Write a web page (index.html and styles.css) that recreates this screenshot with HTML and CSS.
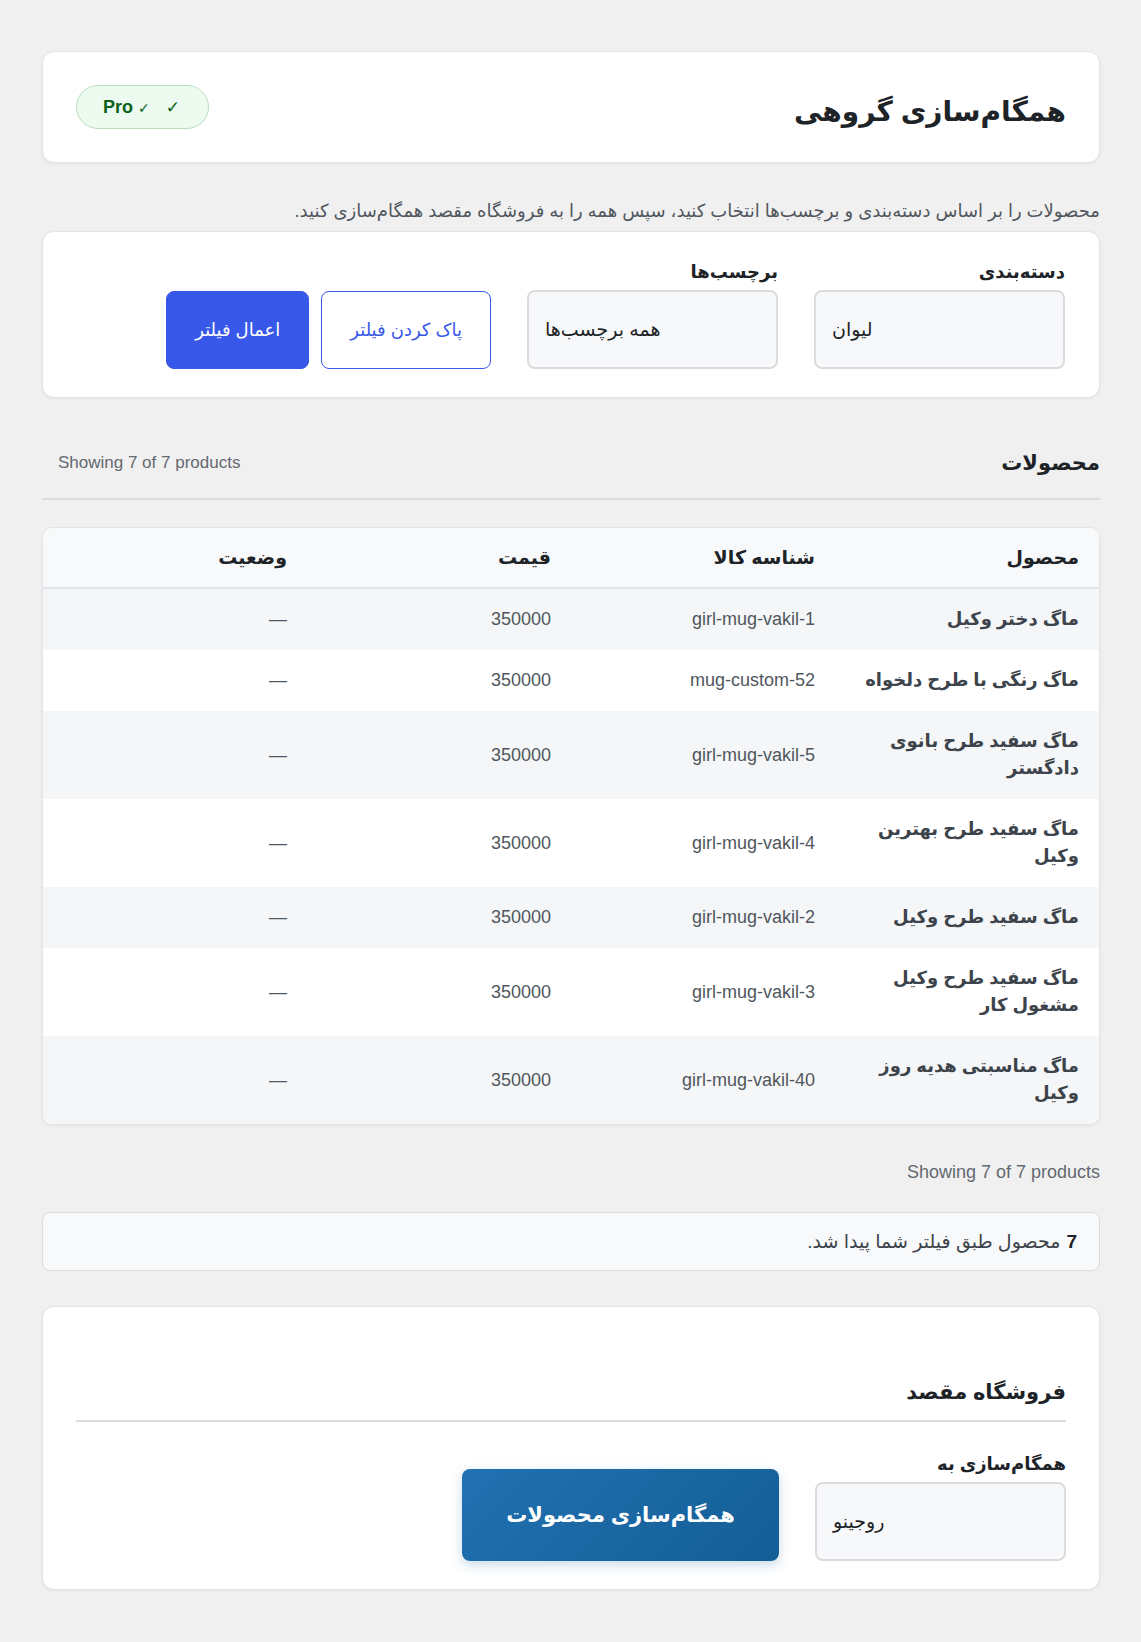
FILE: index.html
```html
<!DOCTYPE html>
<html lang="fa" dir="rtl">
<head>
<meta charset="utf-8">
<title>همگام‌سازی گروهی</title>
<link rel="stylesheet" href="styles.css">
</head>
<body>
<div class="wrap">
  <header class="card head-card">
    <h1 class="page-title">همگام‌سازی گروهی</h1>
    <span class="badge"><span class="badge-text">Pro <span class="tick-sm">✓</span></span><span class="tick-lg">✓</span></span>
  </header>

  <p class="intro">محصولات را بر اساس دسته‌بندی و برچسب‌ها انتخاب کنید، سپس همه را به فروشگاه مقصد همگام‌سازی کنید.</p>

  <section class="card filter-card">
    <div class="row">
      <div class="field">
        <label class="label">دسته‌بندی</label>
        <div class="select">لیوان</div>
      </div>
      <div class="field">
        <label class="label">برچسب‌ها</label>
        <div class="select">همه برچسب‌ها</div>
      </div>
      <div class="actions">
        <button class="btn btn-outline">پاک کردن فیلتر</button>
        <button class="btn btn-primary">اعمال فیلتر</button>
      </div>
    </div>
  </section>

  <div class="section-head">
    <h2 class="section-title">محصولات</h2>
    <span class="count count-top">Showing 7 of 7 products</span>
  </div>

  <div class="table-card">
    <table class="products">
      <thead>
        <tr><th>محصول</th><th>شناسه کالا</th><th>قیمت</th><th>وضعیت</th></tr>
      </thead>
      <tbody>
        <tr><td class="name">ماگ دختر وکیل</td><td class="sku">girl-mug-vakil-1</td><td class="num">350000</td><td class="num">—</td></tr>
        <tr><td class="name">ماگ رنگی با طرح دلخواه</td><td class="sku">mug-custom-52</td><td class="num">350000</td><td class="num">—</td></tr>
        <tr><td class="name">ماگ سفید طرح بانوی دادگستر</td><td class="sku">girl-mug-vakil-5</td><td class="num">350000</td><td class="num">—</td></tr>
        <tr><td class="name">ماگ سفید طرح بهترین وکیل</td><td class="sku">girl-mug-vakil-4</td><td class="num">350000</td><td class="num">—</td></tr>
        <tr><td class="name">ماگ سفید طرح وکیل</td><td class="sku">girl-mug-vakil-2</td><td class="num">350000</td><td class="num">—</td></tr>
        <tr><td class="name">ماگ سفید طرح وکیل مشغول کار</td><td class="sku">girl-mug-vakil-3</td><td class="num">350000</td><td class="num">—</td></tr>
        <tr><td class="name">ماگ مناسبتی هدیه روز وکیل</td><td class="sku">girl-mug-vakil-40</td><td class="num">350000</td><td class="num">—</td></tr>
      </tbody>
    </table>
  </div>

  <div class="count count-bottom">Showing 7 of 7 products</div>

  <div class="notice"><strong>7</strong> محصول طبق فیلتر شما پیدا شد.</div>

  <section class="card target-card">
    <h3 class="target-title">فروشگاه مقصد</h3>
    <div class="row target-row">
      <div class="field">
        <label class="label">همگام‌سازی به</label>
        <div class="select">روجینو</div>
      </div>
      <button class="btn btn-sync">همگام‌سازی محصولات</button>
    </div>
  </section>
</div>
</body>
</html>
```

FILE: styles.css
```css
* { box-sizing: border-box; }

html, body { margin: 0; padding: 0; }

body {
  background: #f0f0f1;
  color: #1d2327;
  font-family: "Liberation Sans", "DejaVu Sans", sans-serif;
  direction: rtl;
}

.wrap {
  margin: 0 41px 0 42px;
  padding: 51px 0 53px;
}

.card {
  background: #fff;
  border: 1px solid #e2e4e7;
  border-radius: 12px;
  box-shadow: 0 1px 3px rgba(0, 0, 0, 0.06);
}

.head-card {
  height: 112px;
  padding: 0 33px;
  display: flex;
  align-items: center;
  justify-content: space-between;
}

.page-title {
  margin: 10px 0 0;
  font-size: 28px;
  line-height: 40px;
  font-weight: 700;
  color: #1d2327;
}

.badge {
  direction: ltr;
  display: inline-flex;
  align-items: center;
  gap: 16px;
  height: 44px;
  padding: 0 28px 0 26px;
  background: #edfaef;
  border: 1px solid #b9dfc1;
  border-radius: 22px;
  color: #0b6119;
  font-weight: 700;
  font-size: 18px;
}

.tick-sm { font-size: 14px; font-weight: 400; }
.tick-lg { font-size: 17px; }

.intro {
  margin: 36px 0 8px;
  font-size: 18px;
  line-height: 24px;
  color: #50575e;
}

.filter-card {
  padding: 29px 34px 28px;
}

.row {
  display: flex;
  align-items: flex-end;
  gap: 36px;
}

.field {
  width: 251px;
  display: flex;
  flex-direction: column;
}

.label {
  display: block;
  font-size: 18px;
  line-height: 22px;
  font-weight: 700;
  color: #1d2327;
  margin-bottom: 7px;
}

.select {
  direction: ltr;
  text-align: left;
  height: 79px;
  display: flex;
  align-items: center;
  padding: 0 16px;
  background: #f7f8f9;
  border: 2px solid #dcdcde;
  border-radius: 8px;
  font-size: 19px;
  color: #1d2327;
}

.actions {
  display: flex;
  gap: 12px;
}

.btn {
  font-family: inherit;
  cursor: pointer;
  border-radius: 8px;
}

.btn-outline {
  height: 78px;
  padding: 0 28px;
  background: #fff;
  border: 1px solid #3858e9;
  color: #3858e9;
  font-size: 18px;
}

.btn-primary {
  height: 78px;
  padding: 0 28px;
  background: #3858e9;
  border: 1px solid #3858e9;
  color: #fff;
  font-size: 18px;
}

.section-head {
  margin-top: 40px;
  padding-bottom: 10px;
  border-bottom: 2px solid #dcdcde;
  display: flex;
  align-items: center;
  justify-content: space-between;
}

.section-title {
  margin: 0;
  font-size: 21px;
  line-height: 50px;
  font-weight: 700;
  color: #1d2327;
}

.count {
  font-size: 17px;
  color: #646970;
}

.count-top {
  padding-left: 16px;
}

.table-card {
  margin-top: 27px;
  background: #fff;
  border: 1px solid #e2e4e7;
  border-radius: 10px;
  overflow: hidden;
  box-shadow: 0 1px 3px rgba(0, 0, 0, 0.06);
}

.products {
  width: 100%;
  border-collapse: collapse;
  table-layout: fixed;
}

.products th {
  text-align: right;
  padding: 16px 20px;
  line-height: 27px;
  font-size: 19px;
  font-weight: 700;
  color: #1d2327;
  background: #f8f9fa;
  border-bottom: 2px solid #e2e4e7;
}

.products td {
  text-align: right;
  padding: 17px 20px;
  line-height: 27px;
  vertical-align: middle;
}

.products tbody tr:nth-child(odd) { background: #f5f6f7; }
.products tbody tr:nth-child(even) { background: #fff; }

.products .name {
  font-size: 18px;
  font-weight: 700;
  color: #3c434a;
}

.products .sku,
.products .num {
  font-size: 18px;
  color: #50575e;
}

.count-bottom {
  margin-top: 36px;
  font-size: 18px;
  line-height: 22px;
}

.notice {
  margin-top: 29px;
  height: 59px;
  display: flex;
  align-items: center;
  padding: 0 22px;
  background: #f8f9fa;
  border: 1px solid #dcdcde;
  border-radius: 8px;
  font-size: 19px;
  color: #3c434a;
}

.notice strong {
  color: #1d2327;
  margin-left: 6px;
}

.target-card {
  margin-top: 35px;
  padding: 33px 33px 28px;
}

.target-title {
  margin: 36px 0 0;
  padding-bottom: 12px;
  font-size: 21px;
  line-height: 32px;
  font-weight: 700;
  color: #1d2327;
  border-bottom: 2px solid #dcdcde;
}

.target-row {
  margin-top: 31px;
}

.btn-sync {
  height: 92px;
  width: 317px;
  border: none;
  color: #fff;
  font-size: 21px;
  font-weight: 700;
  background: linear-gradient(135deg, #2271b1, #135e96);
  box-shadow: 0 4px 12px rgba(34, 113, 177, 0.25);
}
```
